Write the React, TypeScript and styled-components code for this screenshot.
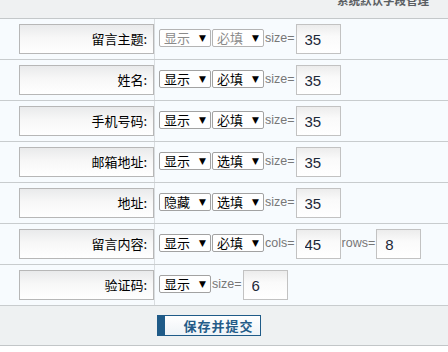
import styled, { createGlobalStyle } from "styled-components";

const GlobalStyle = createGlobalStyle`
  html, body {
    margin: 0;
    padding: 0;
    background: #ffffff;
  }
  body {
    font-family: "Liberation Sans", "Noto Sans CJK SC", sans-serif;
  }
`;

type Field = {
  label: string;
  show: string;
  need?: string;
  disabled?: boolean;
  params: { name: string; value: string }[];
};

const fields: Field[] = [
  { label: "留言主题:", show: "显示", need: "必填", disabled: true, params: [{ name: "size=", value: "35" }] },
  { label: "姓名:", show: "显示", need: "必填", params: [{ name: "size=", value: "35" }] },
  { label: "手机号码:", show: "显示", need: "必填", params: [{ name: "size=", value: "35" }] },
  { label: "邮箱地址:", show: "显示", need: "选填", params: [{ name: "size=", value: "35" }] },
  { label: "地址:", show: "隐藏", need: "选填", params: [{ name: "size=", value: "35" }] },
  {
    label: "留言内容:",
    show: "显示",
    need: "必填",
    params: [
      { name: "cols=", value: "45" },
      { name: "rows=", value: "8" },
    ],
  },
  { label: "验证码:", show: "显示", params: [{ name: "size=", value: "6" }] },
];

const App = () => {
  return (
    <Page>
      <GlobalStyle />
      <Header>
        <Title>系统默认字段管理</Title>
      </Header>
      {fields.map((f) => (
        <Row key={f.label}>
          <LabelCell>
            <LabelBox>{f.label}</LabelBox>
          </LabelCell>
          <FieldCell>
            <Picker $disabled={f.disabled}>{f.show}</Picker>
            {f.need && <Picker $disabled={f.disabled}>{f.need}</Picker>}
            {f.params.map((p) => (
              <Param key={p.name}>
                <ParamName>{p.name}</ParamName>
                <SizeInput defaultValue={p.value} />
              </Param>
            ))}
          </FieldCell>
        </Row>
      ))}
      <Footer>
        <SubmitButton type="button">保存并提交</SubmitButton>
      </Footer>
    </Page>
  );
};

const Page = styled.div`
  width: 100%;
`;

const Header = styled.div`
  height: 18px;
  overflow: hidden;
  display: flex;
  justify-content: flex-end;
  background: #eff1f2;
  border-bottom: 1px solid #c4c8ca;
  padding-right: 19px;
`;

const Title = styled.h3`
  margin: -7px 0 0 0;
  font-family: "Noto Sans CJK SC", sans-serif;
  font-size: 11.5px;
  line-height: 14px;
  font-weight: bold;
  color: #5a5e62;
`;

const Row = styled.div`
  display: grid;
  grid-template-columns: 155px 1fr;
  background: #f7fbfe;
  border-bottom: 1px solid #c8ccce;
`;

const LabelCell = styled.div`
  padding: 5px 0 5px 19px;
  border-right: 1px solid #d9dde0;
`;

const LabelBox = styled.div`
  box-sizing: border-box;
  height: 30px;
  border: 1px solid #b7b7b7;
  background: linear-gradient(to bottom, #e9eaeb 0%, #f7f7f7 45%, #ffffff 100%);
  text-align: right;
  padding-right: 6px;
  font-family: "Noto Sans CJK SC", sans-serif;
  font-size: 13px;
  line-height: 27px;
  color: #000000;
`;

const FieldCell = styled.div`
  display: flex;
  align-items: center;
  padding-left: 4px;
`;

const Picker = styled.span<{ $disabled?: boolean }>`
  box-sizing: border-box;
  display: inline-flex;
  align-items: center;
  justify-content: space-between;
  width: 52px;
  height: 18px;
  margin-right: 1px;
  margin-top: -2px;
  padding: 0 4px 0 4px;
  background: #ffffff;
  border: 1px solid ${(p) => (p.$disabled ? "#b4b4b4" : "#a2a2a2")};
  border-radius: 2px;
  font-family: "Noto Sans CJK SC", sans-serif;
  font-size: 13px;
  line-height: 16px;
  color: ${(p) => (p.$disabled ? "#8a8a8a" : "#000000")};

  &::after {
    content: "▼";
    font-family: "DejaVu Sans", sans-serif;
    font-size: 9px;
    color: #000000;
  }
`;

const Param = styled.span`
  display: inline-flex;
  align-items: center;
`;

const ParamName = styled.span`
  font-family: "Liberation Sans", sans-serif;
  font-size: 12.5px;
  color: #777777;
  margin: -2px 1px 0 0;
`;

const SizeInput = styled.input`
  box-sizing: border-box;
  width: 45px;
  height: 30px;
  margin: 0 1px 0 0;
  padding: 0 0 0 8px;
  border: 1px solid #c2c2c2;
  background: linear-gradient(to bottom, #ececec 0%, #fafafa 40%, #ffffff 100%);
  font-family: "Liberation Sans", sans-serif;
  font-size: 15px;
  color: #1c2838;
  outline: none;
`;

const Footer = styled.div`
  height: 39px;
  box-sizing: content-box;
  display: flex;
  align-items: center;
  padding-left: 157px;
  background: #eef1f2;
  border-bottom: 1px solid #c2c6c8;
`;

const SubmitButton = styled.button`
  box-sizing: border-box;
  width: 104px;
  height: 21px;
  padding: 0 0 0 12px;
  border: 1px solid #1f5b88;
  border-left: 8px solid #1f5b88;
  background: linear-gradient(to bottom, #ffffff 0%, #eef3f7 100%);
  font-family: "Noto Sans CJK SC", sans-serif;
  font-size: 13px;
  font-weight: bold;
  letter-spacing: 1px;
  color: #245c88;
  line-height: 19px;
  cursor: pointer;
`;

export default App;
